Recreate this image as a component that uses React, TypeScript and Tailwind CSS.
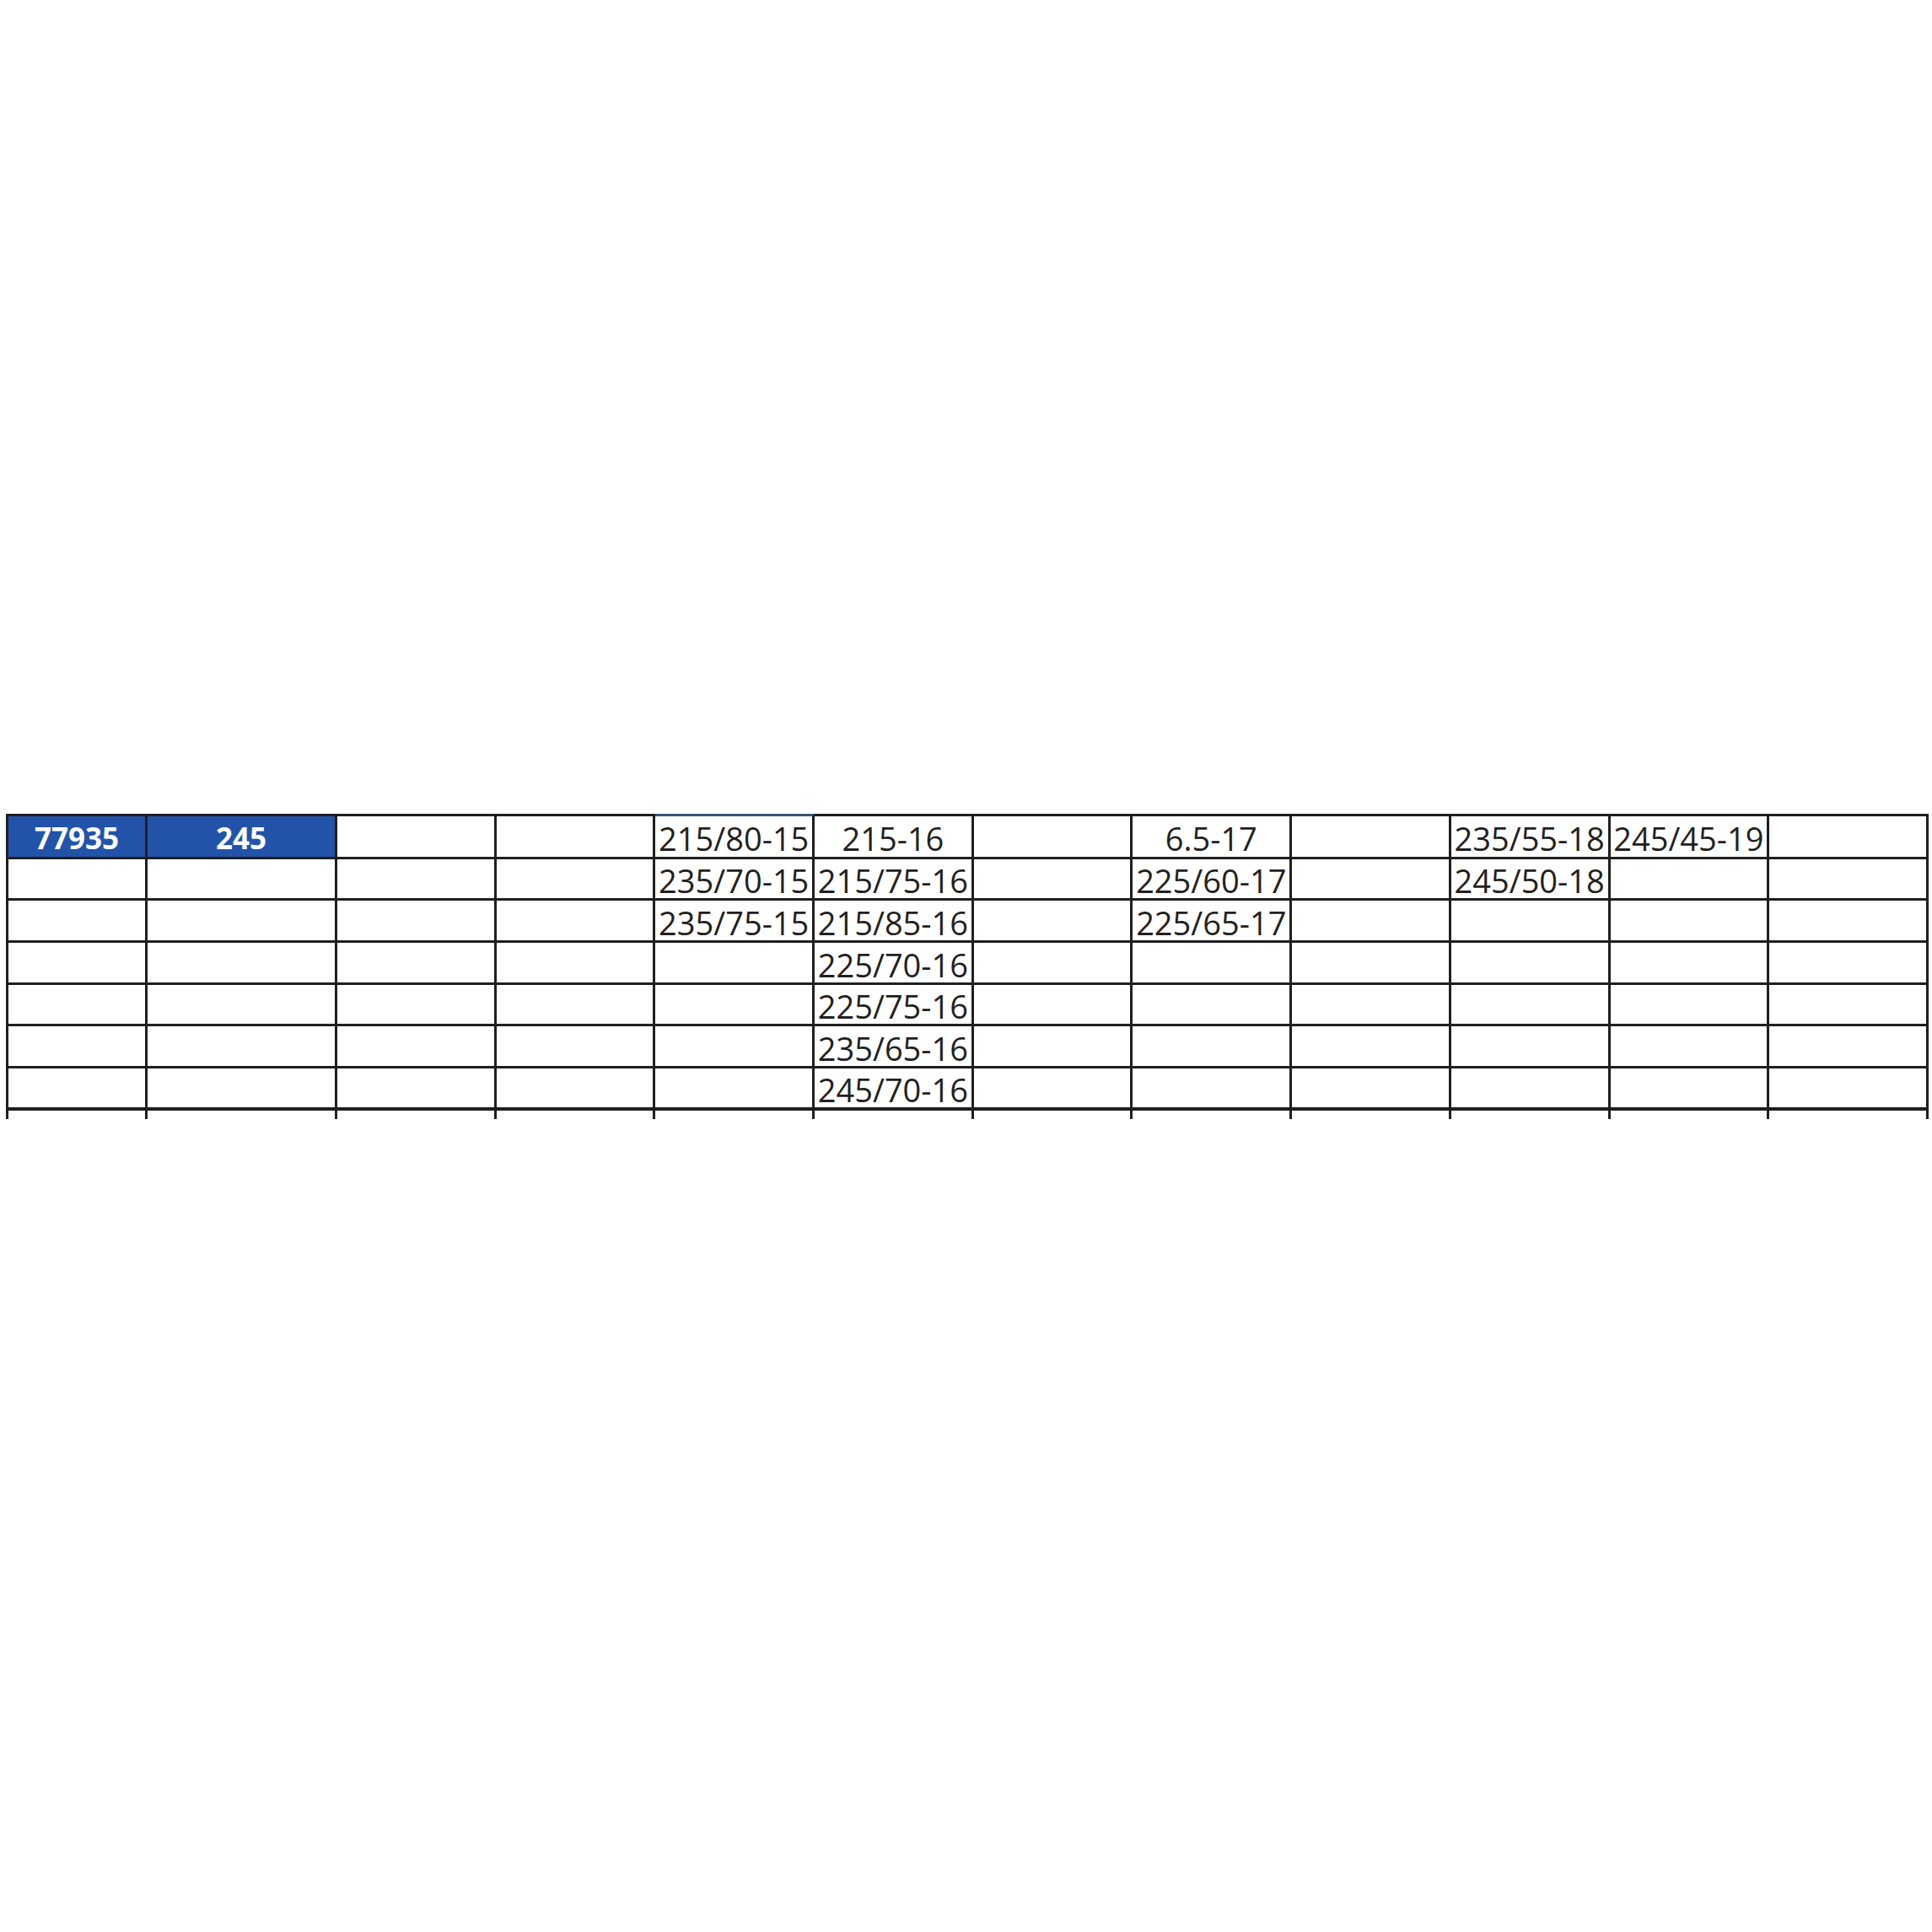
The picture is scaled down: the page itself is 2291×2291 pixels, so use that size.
import React from 'react';

const rows: string[][] = [
  ['77935', '245', '', '', '215/80-15', '215-16', '', '6.5-17', '', '235/55-18', '245/45-19', ''],
  ['', '', '', '', '235/70-15', '215/75-16', '', '225/60-17', '', '245/50-18', '', ''],
  ['', '', '', '', '235/75-15', '215/85-16', '', '225/65-17', '', '', '', ''],
  ['', '', '', '', '', '225/70-16', '', '', '', '', '', ''],
  ['', '', '', '', '', '225/75-16', '', '', '', '', '', ''],
  ['', '', '', '', '', '235/65-16', '', '', '', '', '', ''],
  ['', '', '', '', '', '245/70-16', '', '', '', '', '', ''],
];

const cols = 'grid-cols-[165px_225px_repeat(10,188.7px)]';

function Cell({ value, row, col }: { value: string; row: number; col: number }) {
  const highlight = row === 0 && col < 2;
  const last = row === rows.length - 1;
  const top =
    row === 0
      ? col === 4
        ? 'border-t-[3px] border-t-[#3a5573]'
        : 'border-t-[3px] border-t-[#1f1f22]'
      : '';

  return (
    <div
      className={`flex items-center justify-center border-r-[3px] border-r-[#1f1f22] border-b-[#1f1f22] ${
        last ? 'border-b-[4px]' : 'border-b-[3px]'
      } ${top} ${highlight ? 'bg-[#2353a9]' : 'bg-white'}`}
    >
      {highlight ? (
        <span className="text-[35px] font-bold leading-none text-white pt-[4px]">{value}</span>
      ) : (
        <span className="text-[38px] font-medium leading-none text-[#231f20] pt-[5px]">{value}</span>
      )}
    </div>
  );
}

export default function App() {
  return (
    <div
      className="w-[2291px] h-[2291px] bg-white pt-[965px] pl-[7px]"
      style={{ fontFamily: '"Open Sans", "Noto Sans", sans-serif' }}
    >
      <div className={`grid ${cols} grid-rows-[53.5px_repeat(6,49.7px)] w-fit border-l-[3px] border-l-[#1f1f22]`}>
        {rows.map((r, ri) =>
          r.map((v, ci) => <Cell key={`${ri}-${ci}`} value={v} row={ri} col={ci} />)
        )}
      </div>
      <div className={`grid ${cols} h-[10px] w-fit border-l-[3px] border-l-[#1f1f22]`}>
        {rows[0].map((_, ci) => (
          <div key={ci} className="border-r-[3px] border-r-[#1f1f22]" />
        ))}
      </div>
    </div>
  );
}
